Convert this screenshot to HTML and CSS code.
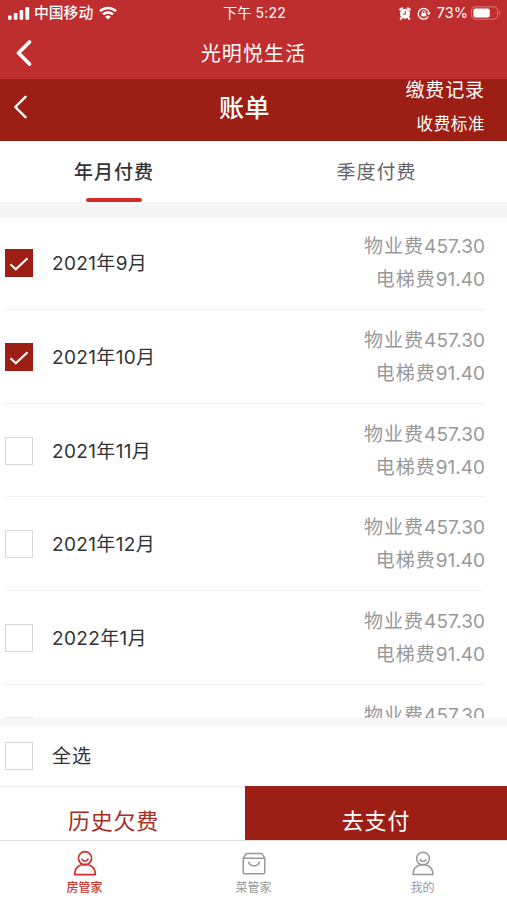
FILE: index.html
```html
<!DOCTYPE html>
<html lang="zh-CN">
<head>
    <meta charset="UTF-8">
    <meta name="viewport" content="width=device-width, initial-scale=1.0">
    <title>光明悦生活 - 账单</title>
    <link rel="stylesheet" href="styles.css">
</head>
<body>
    <div class="app">
        <header class="app-header">
            <div class="status-bar">
                <div class="status-left">
                    <svg class="signal" viewBox="0 0 22 14" width="22" height="14" fill="#fff">
                        <rect x="0" y="9.5" width="3.6" height="4.2" rx="1"/>
                        <rect x="5.8" y="7" width="3.6" height="6.7" rx="1"/>
                        <rect x="11.6" y="4" width="3.6" height="9.7" rx="1"/>
                        <rect x="17.4" y="1" width="3.8" height="12.7" rx="1"/>
                    </svg>
                    <span class="carrier">中国移动</span>
                    <svg class="wifi" viewBox="0 0 18 14" width="18" height="14" fill="none" stroke="#fff" stroke-width="2.5">
                        <path d="M1 5.2a11.4 11.4 0 0 1 16 0"/>
                        <path d="M4 8.4a7.2 7.2 0 0 1 10 0"/>
                        <path d="M9 13.6L6.2 10.8a4 4 0 0 1 5.6 0z" fill="#fff" stroke="none"/>
                    </svg>
                </div>
                <div class="status-time">下午 5:22</div>
                <div class="status-right">
                    <svg viewBox="0 0 12 13" width="12" height="13">
                        <circle cx="6" cy="6.8" r="5" fill="#fff"/>
                        <path d="M1.2 2.6L3 1.2M10.8 2.6L9 1.2M2.5 10.6l-.8 1.3M9.5 10.6l.8 1.3" stroke="#fff" stroke-width="2" stroke-linecap="round"/>
                        <path d="M6.3 4v3.1H4" fill="none" stroke="#bf2e2f" stroke-width="1"/>
                    </svg>
                    <svg class="lock" viewBox="0 0 14 13" width="14" height="13" fill="none" stroke="#fff">
                        <path d="M11.3 9.6a5.4 5.4 0 1 1 .6-4.2" stroke-width="1.3"/>
                        <path d="M9.8 5.6h4L11.8 8.3z" fill="#fff" stroke="none"/>
                        <rect x="4.4" y="6" width="4.8" height="3.4" fill="#fff" stroke="none"/>
                        <path d="M5.4 6.3V5a1.4 1.4 0 0 1 2.8 0v1.3" stroke-width="1"/>
                    </svg>
                    <span class="battery-text">73%</span>
                    <svg viewBox="0 0 30 14" width="30" height="14">
                        <rect x=".6" y=".8" width="26" height="12.4" rx="3.6" fill="none" stroke="#d97776" stroke-width="1"/>
                        <rect x="2.4" y="2.6" width="16.4" height="8.8" rx="2" fill="#fff"/>
                        <path d="M28 4.8c1.6.5 1.6 3.9 0 4.4z" fill="#d97776"/>
                    </svg>
                </div>
            </div>
            <div class="nav">
                <svg class="nav-back" viewBox="0 0 16 26" width="16" height="26" fill="none" stroke="#fff" stroke-width="3.6" stroke-linecap="round" stroke-linejoin="round">
                    <path d="M13.5 2L2.5 13l11 11"/>
                </svg>
                <h1>光明悦生活</h1>
            </div>
        </header>

        <div class="bill-header">
            <svg class="bill-back" viewBox="0 0 14 24" width="14" height="24" fill="none" stroke="#fff" stroke-width="2.4" stroke-linecap="round" stroke-linejoin="round">
                <path d="M12.5 1.8L2.3 12l10.2 10.2"/>
            </svg>
            <h2>账单</h2>
            <div class="bill-links">
                <a class="link-record">缴费记录</a>
                <a class="link-standard">收费标准</a>
            </div>
        </div>

        <div class="tabs">
            <div class="tab active">年月付费</div>
            <div class="tab">季度付费</div>
        </div>

        <div class="bill-scroll">
            <ul class="bill-list">
                <li class="bill-item">
                    <span class="checkbox checked"><svg viewBox="0 0 28 28" width="28" height="28" fill="none" stroke="#fff" stroke-width="2.2"><path d="M5.5 15.2l5.3 5L22.5 9.3"/></svg></span>
                    <span class="month">2021年9月</span>
                    <div class="fees"><div>物业费<span class="num">457.30</span></div><div>电梯费<span class="num">91.40</span></div></div>
                </li>
                <li class="bill-item">
                    <span class="checkbox checked"><svg viewBox="0 0 28 28" width="28" height="28" fill="none" stroke="#fff" stroke-width="2.2"><path d="M5.5 15.2l5.3 5L22.5 9.3"/></svg></span>
                    <span class="month">2021年10月</span>
                    <div class="fees"><div>物业费<span class="num">457.30</span></div><div>电梯费<span class="num">91.40</span></div></div>
                </li>
                <li class="bill-item">
                    <span class="checkbox"></span>
                    <span class="month">2021年11月</span>
                    <div class="fees"><div>物业费<span class="num">457.30</span></div><div>电梯费<span class="num">91.40</span></div></div>
                </li>
                <li class="bill-item">
                    <span class="checkbox"></span>
                    <span class="month">2021年12月</span>
                    <div class="fees"><div>物业费<span class="num">457.30</span></div><div>电梯费<span class="num">91.40</span></div></div>
                </li>
                <li class="bill-item">
                    <span class="checkbox"></span>
                    <span class="month">2022年1月</span>
                    <div class="fees"><div>物业费<span class="num">457.30</span></div><div>电梯费<span class="num">91.40</span></div></div>
                </li>
                <li class="bill-item">
                    <span class="checkbox"></span>
                    <div class="fees"><div>物业费<span class="num">457.30</span></div></div>
                </li>
            </ul>
        </div>

        <div class="select-all">
            <span class="checkbox"></span>
            <span class="month">全选</span>
        </div>

        <div class="actions">
            <div class="btn-history">历史欠费</div>
            <div class="btn-pay">去支付</div>
        </div>

        <nav class="tabbar">
            <div class="tabbar-item active">
                <svg viewBox="0 0 24 26" width="24" height="26" fill="none" stroke="currentColor" stroke-width="1.7" stroke-linejoin="round">
                    <circle cx="12" cy="8.2" r="6.6"/>
                    <path d="M9 9.2c1.5 2.6 4.5 2.6 6 0" stroke-linecap="round"/>
                    <path d="M8.4 14.8C4.4 16 1.8 19.2 1.6 24.6h20.8c-.2-5.4-2.8-8.6-6.8-9.8M8.4 14.8q3.6-1 7.2 0"/>
                </svg>
                <span>房管家</span>
            </div>
            <div class="tabbar-item">
                <svg viewBox="0 0 24 26" width="24" height="26" fill="none" stroke="currentColor" stroke-width="1.5" stroke-linejoin="round">
                    <path d="M1.2 8.2L4.2 3.4h15.6l3 4.8v14.4a1.2 1.2 0 0 1-1.2 1.2H2.4a1.2 1.2 0 0 1-1.2-1.2zM1.2 8.2h21.6"/>
                    <path d="M6.6 12.2c2 4.8 8.8 4.8 10.8 0" stroke-linecap="round"/>
                </svg>
                <span>菜管家</span>
            </div>
            <div class="tabbar-item">
                <svg viewBox="0 0 24 26" width="24" height="26" fill="none" stroke="currentColor" stroke-width="1.5" stroke-linejoin="round">
                    <circle cx="12" cy="8.6" r="6.4"/>
                    <path d="M9 9.8c1.5 2.1 4.5 2.1 6 0" stroke-linecap="round"/>
                    <path d="M8.6 15C4.8 16.2 2.2 19 2 24.4h20c-.2-5.4-2.8-8.2-6.6-9.4M8.6 15q3.4-.9 6.8 0"/>
                </svg>
                <span>我的</span>
            </div>
        </nav>
    </div>
</body>
</html>
```
FILE: styles.css
```css
* {
    box-sizing: border-box;
}
body {
    margin: 0;
    padding: 0;
    background-color: #fff;
    color: #333;
    font-family: Inter, "Noto Sans CJK SC", sans-serif;
}
h1, h2, ul {
    margin: 0;
    padding: 0;
    font-weight: normal;
}
svg {
    display: block;
    flex-shrink: 0;
}
.app {
    width: 507px;
    height: 900px;
    display: flex;
    flex-direction: column;
    overflow: hidden;
}
.app-header {
    height: 79px;
    background-color: #bf2e2f;
    color: #fff;
}
.status-bar {
    display: grid;
    grid-template-columns: 1fr auto 1fr;
    align-items: center;
    height: 26px;
    padding: 0 6px 0 8px;
    font-size: 14px;
    line-height: 26px;
}
.status-left,
.status-right {
    display: flex;
    align-items: center;
}
.status-right {
    justify-content: flex-end;
}
.status-time {
    letter-spacing: 0.2px;
}
.carrier {
    margin: 0 6px 0 4px;
    font-size: 14.8px;
    font-weight: 500;
}
.lock {
    margin: 0 6px 0 6px;
}
.battery-text {
    margin-right: 3px;
    font-size: 14.5px;
}
.nav {
    display: grid;
    grid-template-columns: 44px 1fr 44px;
    align-items: center;
    height: 53px;
}
.nav-back {
    margin-left: 16px;
}
.nav h1 {
    font-size: 20px;
    letter-spacing: 1.1px;
    text-align: center;
}
.bill-header {
    display: grid;
    grid-template-columns: 120px 1fr 120px;
    height: 61.5px;
    padding: 0 22px 0 13px;
    background-color: #9c1e15;
    color: #fff;
}
.bill-back {
    margin-top: 16px;
}
.bill-header h2 {
    padding: 9px 9px 0 0;
    font-size: 25px;
    font-weight: 500;
    letter-spacing: 0.5px;
    line-height: 40px;
    text-align: center;
}
.bill-links {
    display: flex;
    flex-direction: column;
    align-items: flex-end;
}
.link-record {
    font-size: 19px;
    letter-spacing: 0.9px;
    line-height: 24px;
}
.link-standard {
    margin-top: 9px;
    font-size: 16.5px;
    letter-spacing: 0.6px;
    line-height: 24px;
}
.tabs {
    display: flex;
    height: 61.5px;
}
.tab {
    position: relative;
    width: 228px;
    flex-shrink: 0;
    font-size: 19px;
    letter-spacing: 1px;
    line-height: 64px;
    text-align: center;
    color: #666;
}
.tab + .tab {
    width: 297px;
}
.tab.active {
    color: #333;
    font-weight: 500;
}
.tab.active::after {
    content: "";
    position: absolute;
    left: 86px;
    bottom: 0;
    width: 56px;
    height: 4px;
    border-radius: 2px;
    background-color: #d32b2d;
}
.bill-scroll {
    height: 524px;
    border-top: 16px solid #f5f5f5;
    border-bottom: 8px solid #f7f7f7;
    overflow: hidden;
}
.bill-list {
    margin: -2px 22px 0 5px;
    list-style: none;
}
.bill-item {
    display: flex;
    height: 93.8px;
    border-bottom: 1px solid #f3f3f3;
}
.bill-item .checkbox {
    margin-top: 33px;
}
.checkbox {
    width: 28px;
    height: 28px;
    flex-shrink: 0;
    border: 1.5px solid #d6d6d6;
}
.checkbox.checked {
    border: none;
    background-color: #9c1e15;
}
.bill-item:last-child .checkbox {
    margin-top: 32px;
    border-color: #ebebeb;
}
.month {
    margin-left: 19px;
    font-size: 19px;
    letter-spacing: 0.35px;
    line-height: 95px;
}
.fees {
    margin-left: auto;
    padding-top: 14px;
    font-size: 19px;
    letter-spacing: 1px;
    line-height: 33px;
    text-align: right;
    color: #999;
}
.num {
    letter-spacing: 0;
}
.select-all {
    display: flex;
    align-items: center;
    height: 60px;
    padding-left: 5px;
}
.select-all .month {
    padding-top: 2px;
    letter-spacing: 1px;
    line-height: 60px;
}
.actions {
    display: flex;
    height: 54px;
    font-size: 22px;
    letter-spacing: 0.8px;
    line-height: 70px;
    text-align: center;
}
.btn-history {
    width: 245px;
    padding-right: 18px;
    border-top: 1px solid #f1f1f1;
    line-height: 68px;
    color: #a92c25;
}
.btn-pay {
    flex: 1;
    background-color: #9c1e15;
    color: #fff;
}
.tabbar {
    display: flex;
    height: 60px;
    border-top: 1px solid #dedede;
}
.tabbar-item {
    flex: 1;
    display: flex;
    flex-direction: column;
    align-items: center;
    padding-top: 9px;
    font-size: 12px;
    line-height: 24px;
    color: #999;
}
.tabbar-item.active {
    color: #d0322e;
    font-weight: 500;
}
```
